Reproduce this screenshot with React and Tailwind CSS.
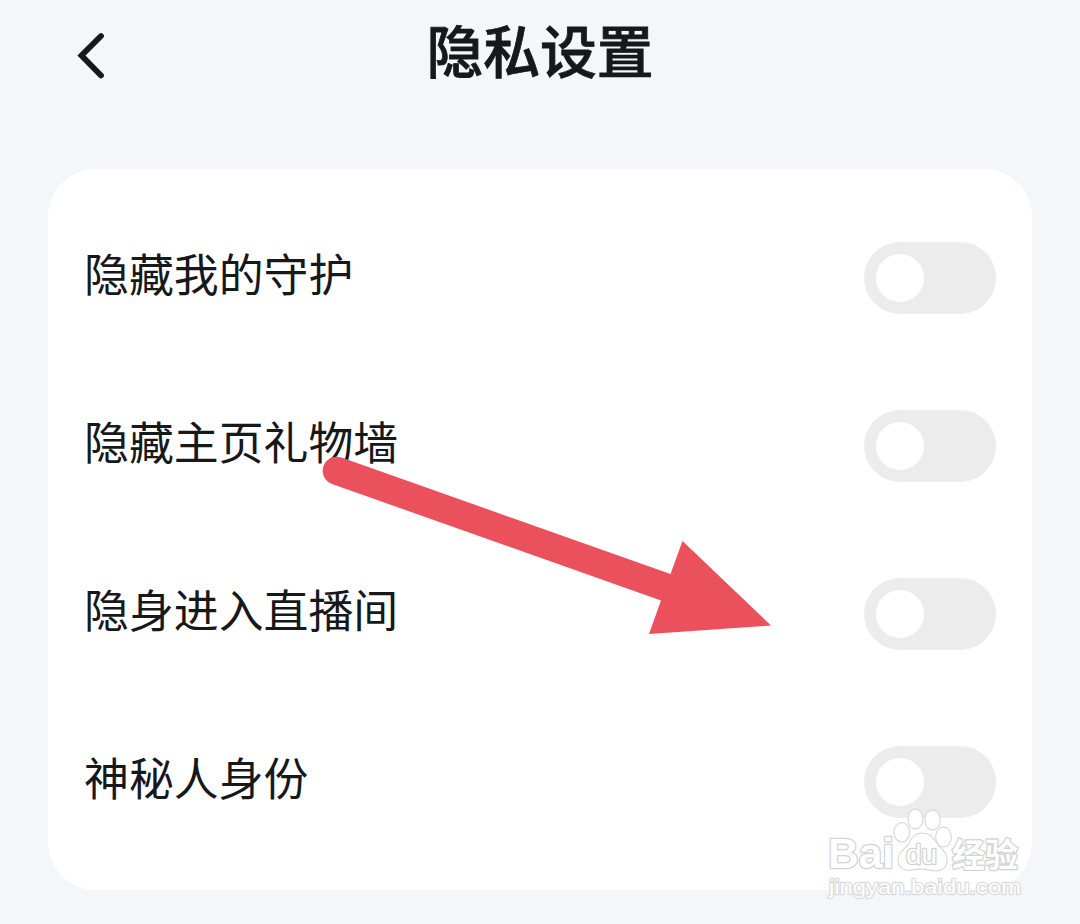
import { useState } from 'react';

const settings = [
    { id: 'guard', label: '隐藏我的守护' },
    { id: 'giftWall', label: '隐藏主页礼物墙' },
    { id: 'liveRoom', label: '隐身进入直播间' },
    { id: 'mystery', label: '神秘人身份' },
];

function Toggle({ label, checked, onChange }) {
    return (
        <button
            type="button"
            role="switch"
            aria-checked={checked}
            aria-label={label}
            onClick={onChange}
            className={`flex h-[72px] w-[132px] items-center rounded-full px-3 ${checked ? 'justify-end bg-[#ea515c]' : 'justify-start bg-[#ececec]'}`}
        >
            <span className="size-12 rounded-full bg-white" />
        </button>
    );
}

// Red pointer drawn over the list
function Arrow() {
    return (
        <svg className="pointer-events-none absolute left-0 top-0" width="1080" height="924" viewBox="0 0 1080 924">
            <path
                d="M341.5 457.5 L670.5 574 L682.5 541 L771 625.5 L649 634 L661 600.5 L332 484 A14 14 0 0 1 341.5 457.5 Z"
                fill="#ea515c"
            />
        </svg>
    );
}

function Watermark() {
    return (
        <svg
            className="pointer-events-none absolute left-[820px] top-[800px]"
            width="220"
            height="110"
            viewBox="0 0 220 110"
            fill="white"
            stroke="#d3d3d3"
            strokeWidth="1.2"
            paintOrder="stroke"
            strokeLinejoin="round"
        >
            <text x="8" y="68" fontFamily="Liberation Sans, sans-serif" fontWeight="bold" fontSize="43" textLength="66" lengthAdjust="spacingAndGlyphs" strokeWidth="2.6">Bai</text>
            <g strokeWidth="2">
                <ellipse cx="81.8" cy="32.3" rx="7.4" ry="9.2" />
                <ellipse cx="95.5" cy="19" rx="7" ry="9.4" />
                <ellipse cx="112.5" cy="20" rx="7.2" ry="9.4" />
                <ellipse cx="123.5" cy="37" rx="7.4" ry="9.4" />
                <path d="M102 33.500 C96 33.500 92 38 89 44 C86 49 78.500 52 78.500 60 C78.500 67 84 70.500 91 69.500 C95 69 98 68.500 102 68.500 C107 68.500 110 70.500 116 70.500 C123 70.500 127 66 126.500 59 C126 52 120 48 116 43 C112 37 109 33.500 102 33.500 Z" />
            </g>
            <text x="86" y="64" fontFamily="Liberation Sans, sans-serif" fontSize="27" textLength="31" lengthAdjust="spacingAndGlyphs" strokeWidth="2.6">du</text>
            <text x="132" y="67" fontFamily="Noto Sans CJK SC, sans-serif" fontWeight="bold" fontSize="33" textLength="66" strokeWidth="2.6">经验</text>
            <text x="9" y="94" fontFamily="Liberation Sans, sans-serif" fontSize="21" textLength="192" lengthAdjust="spacingAndGlyphs" strokeWidth="2.4" stroke="#dcdcdc">jingyan.baidu.com</text>
        </svg>
    );
}

function App() {
    const [enabled, setEnabled] = useState({});

    const toggle = (id) => {
        setEnabled((prev) => ({ ...prev, [id]: !prev[id] }));
    };

    return (
        <div className="relative h-[924px] w-[1080px] overflow-hidden bg-[#f4f6fa] font-['Noto_Sans_CJK_SC',sans-serif] text-[#17181a]">
            <header className="grid h-[169px] grid-cols-[1fr_auto_1fr] items-start px-[72px]">
                <button type="button" aria-label="返回" className="mt-7 w-10">
                    <svg width="40" height="56" viewBox="0 0 40 56" fill="none" stroke="currentColor" strokeWidth="5.8" strokeLinecap="round" strokeLinejoin="miter">
                        <path d="M29 8 L9.500 27.500 L29 47.500" />
                    </svg>
                </button>
                <h1 className="mt-1.5 text-[56.8px] font-medium leading-[84px] [-webkit-text-stroke:0.8px]">隐私设置</h1>
            </header>
            <main className="mx-12 h-[721px] rounded-[48px] bg-white px-9 pt-[25px]">
                {settings.map((item) => (
                    <div key={item.id} className="flex h-[168px] items-center justify-between">
                        <span className="pb-2.5 text-[44.9px] leading-[66px]">{item.label}</span>
                        <Toggle label={item.label} checked={!!enabled[item.id]} onChange={() => toggle(item.id)} />
                    </div>
                ))}
            </main>
            <Arrow />
            <Watermark />
        </div>
    );
}

export default App;
